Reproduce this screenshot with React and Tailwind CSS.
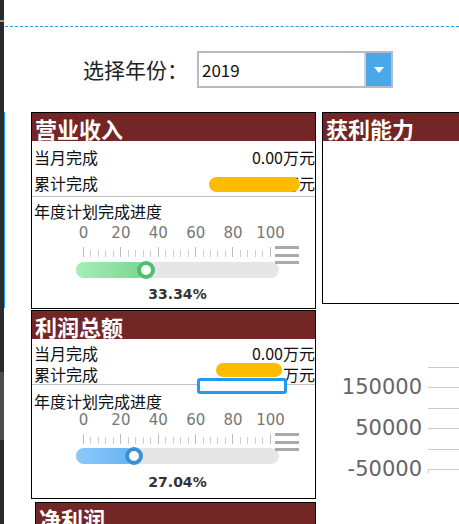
import React from 'react';

const cjk = "font-['Noto_Sans_CJK_SC',sans-serif]";
const dejavu = "font-['DejaVu_Sans',sans-serif]";

// header bar shared by every panel
function Panel({ title, className = '', children }) {
  return (
    <div className={`border border-black ${className}`}>
      <div className="flex h-[28px] items-end bg-[#722626] pl-[3px] text-[22px] font-bold leading-[26px] text-white">
        {title}
      </div>
      {children}
    </div>
  );
}

function Progress({ value, tight, fill, ring }) {
  const x = 7.5 + parseFloat(value) * 1.87;
  const ticks = Array.from({ length: 26 }, (_, i) => i);
  return (
    <div className={tight ? 'pt-[6px] pb-[8px]' : 'pt-[4px] pb-[6px]'}>
      <div className="h-[20px] pl-[2px] text-[16px] leading-[20px] text-[#111]">年度计划完成进度</div>
      <div className={`ml-[44px] w-[203px] ${tight ? '' : 'mt-[3px]'}`}>
        <div className={`ml-[-7.5px] flex h-[18px] w-[217px] justify-between text-[15px] leading-[18px] text-[#777] ${dejavu}`}>
          {[0, 20, 40, 60, 80, 100].map(n => (
            <span key={n} className="w-[30px] text-center">{n}</span>
          ))}
        </div>
        <div className="relative mt-[5px] h-[10px]">
          <div className="ml-[7px] flex h-full w-[188px] items-end justify-between">
            {ticks.map(i => (
              <span key={i} className={i % 5 === 0 ? 'h-[10px] w-px bg-[#bdbdbd]' : 'h-[7px] w-px bg-[#cfcfcf]'} />
            ))}
          </div>
          <div className="absolute left-[199px] top-[-1px] z-10 flex w-[24px] flex-col gap-[4.5px]">
            <span className="h-[3px] bg-[#aaa]" />
            <span className="h-[3px] bg-[#aaa]" />
            <span className="h-[3px] bg-[#aaa]" />
          </div>
        </div>
        <div className={`relative h-[16px] rounded-full bg-[#e6e6e6] ${tight ? 'mt-[4px]' : 'mt-[5px]'}`}>
          <div className={`absolute inset-y-0 left-0 rounded-full ${fill}`} style={{ width: x }} />
          <div
            className={`absolute top-1/2 h-[18px] w-[18px] -translate-x-1/2 -translate-y-1/2 rounded-full border-4 bg-white ${ring}`}
            style={{ left: x }}
          />
        </div>
        <div className={`h-[16px] text-center text-[14px] font-bold leading-[16px] text-[#333] ${dejavu} ${tight ? 'mt-[10px]' : 'mt-[8px]'}`}>
          {value}%
        </div>
      </div>
    </div>
  );
}

function Row({ label, value, h, children }) {
  return (
    <div className={`relative flex items-center justify-between pl-[2px] text-[16px] leading-none text-[#111] ${h}`}>
      <span>{label}</span>
      <span>{value}</span>
      {children}
    </div>
  );
}

const axis = ['', '150000', '', '50000', '', '-50000'];

export default function App() {
  return (
    <div className={`flex h-[524px] w-[459px] overflow-hidden bg-white ${cjk}`}>
      {/* left window edge */}
      <div className="flex w-[5px] shrink-0">
        <div className="flex w-[4px] flex-col">
          <div className="h-[20px] bg-[#2b2b2b]" />
          <div className="h-[2px] bg-[#9a9a9a]" />
          <div className="h-[350px] bg-[#2b2b2b]" />
          <div className="h-[68px] bg-[#4b4b4b]" />
          <div className="flex-1 bg-[#2b2b2b]" />
        </div>
        <div className="flex w-px flex-col">
          <div className="h-[112px]" />
          <div className="h-[196px] bg-[#1e9bf0]" />
        </div>
      </div>

      <div className="flex min-w-0 flex-1 flex-col">
        <div className="mt-[26px] h-0 border-t border-dashed border-[#1e9bf0]" />

        {/* year selector */}
        <div className="mt-[24px] flex h-[37px] items-center pl-[78px]">
          <span className="text-[21px] leading-none text-[#222]">选择年份：</span>
          <div className="ml-[9px] flex h-[37px] w-[196px] border-2 border-[#b9b9c9]">
            <span className="flex-1 pl-[3px] text-[17px] leading-[33px] text-[#111]">2019</span>
            <div className="flex w-[27px] items-center justify-center border-l-2 border-[#cfcfd8] bg-[#4aa8ea]">
              <svg width="10" height="6" viewBox="0 0 10 6">
                <polygon points="0,0 10,0 5,6" fill="#fff" />
              </svg>
            </div>
          </div>
        </div>

        <div className="mt-[24px] flex gap-[6px] pl-[26px]">
          <div className="flex w-[285px] shrink-0 flex-col">
            <Panel title="营业收入">
              <div className="pt-[3px]">
                <Row label="当月完成" value="0.00万元" h="h-[26px]" />
                <Row label="累计完成" value="万元" h="h-[26px]">
                  <span className="absolute right-[15px] top-[7px] h-[15px] w-[91px] rounded-full bg-[#ffbb00]" />
                </Row>
              </div>
              <div className="h-px bg-[#c2c2c2]" />
              <Progress
                value="33.34"
                fill="bg-[linear-gradient(90deg,#a6eeb6,#7bd690)]"
                ring="border-[#4fbf6e]"
              />
            </Panel>

            <Panel title="利润总额" className="mt-px">
              <div className="pt-[3px]">
                <Row label="当月完成" value="0.00万元" h="h-[21px]" />
                <Row label="累计完成" value="万元" h="h-[21px]">
                  <span className="absolute right-[33px] top-0 h-[14px] w-[66px] rounded-full bg-[#ffbb00]" />
                  <span className="absolute right-[28px] top-[15px] z-10 h-[16px] w-[90px] rounded-[3px] border-[3px] border-[#1e9bf5] bg-white" />
                </Row>
              </div>
              <div className="h-px bg-[#c2c2c2]" />
              <Progress
                value="27.04"
                tight
                fill="bg-[linear-gradient(90deg,#8ccafa,#67b3f0)]"
                ring="border-[#3b8fd4]"
              />
            </Panel>

            <Panel title="净利润" className="ml-[4px] mt-[3px] h-[40px]" />
          </div>

          <div className="flex w-[160px] shrink-0 flex-col">
            <Panel title="获利能力" className="h-[192px]" />
            <div className="mt-[53px] flex flex-col">
              {axis.map((t, i) => (
                <div key={i} className="flex h-[20.5px] items-center">
                  <span className={`w-[100px] text-right text-[21px] leading-none text-[#666] ${dejavu}`}>{t}</span>
                  <div className="relative ml-[6px] h-px flex-1 bg-[#cccccc]">
                    {i === axis.length - 1 && <span className="absolute left-0 top-0 h-[4px] w-px bg-[#cccccc]" />}
                  </div>
                </div>
              ))}
            </div>
          </div>
        </div>
      </div>
    </div>
  );
}
